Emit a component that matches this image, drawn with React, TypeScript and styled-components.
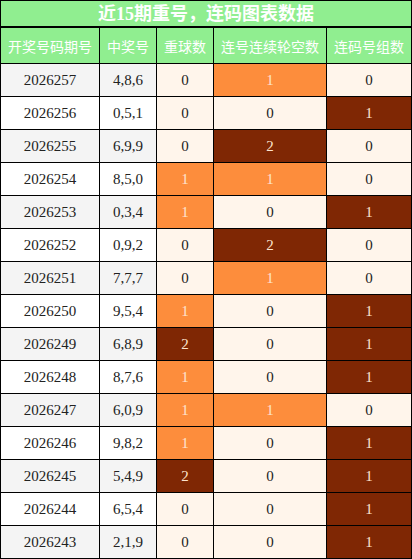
import React from 'react';
import styled, { createGlobalStyle } from 'styled-components';

const GlobalStyle = createGlobalStyle`
  html, body {
    margin: 0;
    padding: 0;
    background: #ffffff;
  }
  body {
    font-family: "Liberation Serif", "Noto Sans CJK SC", serif;
  }
`;

type Level = 'none' | 'mid' | 'high';

const Page = styled.div`
  width: 412px;
  box-sizing: border-box;
`;

const Title = styled.div`
  height: 27px;
  box-sizing: border-box;
  border: 1px solid #000;
  background: #90ee90;
  color: #fff;
  font-family: "Liberation Serif", "Noto Sans CJK SC", serif;
  font-size: 18px;
  font-weight: bold;
  display: flex;
  align-items: center;
  justify-content: center;
  line-height: 1;
`;

const Grid = styled.div`
  display: grid;
  grid-template-columns: 99px 57px 57px 113px 85px;
  grid-template-rows: 36px;
  grid-auto-rows: 33px;
  border-top: 1px solid #000;
  border-left: 1px solid #000;
`;

const HeadCell = styled.div`
  box-sizing: border-box;
  border-right: 1px solid #000;
  border-bottom: 1px solid #000;
  background: #90ee90;
  color: #fff;
  font-family: "Noto Sans CJK SC", sans-serif;
  font-size: 14px;
  display: flex;
  align-items: center;
  justify-content: center;
`;

const Cell = styled.div<{ $shade?: boolean }>`
  box-sizing: border-box;
  border-right: 1px solid #000;
  border-bottom: 1px solid #000;
  background: ${(p) => (p.$shade ? '#f4f4f4' : '#ffffff')};
  color: #222;
  font-size: 15px;
  display: flex;
  align-items: center;
  justify-content: center;
`;

const levelBg: Record<Level, string> = {
  none: '#fff5eb',
  mid: '#fd8d3c',
  high: '#7f2704',
};

const HeatCell = styled(Cell)<{ $level: Level }>`
  background: ${(p) => levelBg[p.$level]};
  color: ${(p) => (p.$level === 'none' ? '#222' : '#fde3cf')};
`;

type Row = [string, string, number, number, number];

const rows: Row[] = [
  ['2026257', '4,8,6', 0, 1, 0],
  ['2026256', '0,5,1', 0, 0, 1],
  ['2026255', '6,9,9', 0, 2, 0],
  ['2026254', '8,5,0', 1, 1, 0],
  ['2026253', '0,3,4', 1, 0, 1],
  ['2026252', '0,9,2', 0, 2, 0],
  ['2026251', '7,7,7', 0, 1, 0],
  ['2026250', '9,5,4', 1, 0, 1],
  ['2026249', '6,8,9', 2, 0, 1],
  ['2026248', '8,7,6', 1, 0, 1],
  ['2026247', '6,0,9', 1, 1, 0],
  ['2026246', '9,8,2', 1, 0, 1],
  ['2026245', '5,4,9', 2, 0, 1],
  ['2026244', '6,5,4', 0, 0, 1],
  ['2026243', '2,1,9', 0, 0, 1],
];

const headers = ['开奖号码期号', '中奖号', '重球数', '连号连续轮空数', '连码号组数'];

// 0 / 1 / 2 scale for the first two count columns
const scale3 = (v: number): Level => (v >= 2 ? 'high' : v === 1 ? 'mid' : 'none');
// the last column only ever goes 0 / 1
const scale2 = (v: number): Level => (v >= 1 ? 'high' : 'none');

function App() {
  return (
    <Page>
      <GlobalStyle />
      <Title>近15期重号，连码图表数据</Title>
      <Grid>
        {headers.map((h) => (
          <HeadCell key={h}>{h}</HeadCell>
        ))}
        {rows.map(([issue, nums, repeat, gap, groups], i) => {
          const shade = i % 2 === 0;
          return (
            <React.Fragment key={issue}>
              <Cell $shade={shade}>{issue}</Cell>
              <Cell $shade={shade}>{nums}</Cell>
              <HeatCell $level={scale3(repeat)}>{repeat}</HeatCell>
              <HeatCell $level={scale3(gap)}>{gap}</HeatCell>
              <HeatCell $level={scale2(groups)}>{groups}</HeatCell>
            </React.Fragment>
          );
        })}
      </Grid>
    </Page>
  );
}

export default App;
